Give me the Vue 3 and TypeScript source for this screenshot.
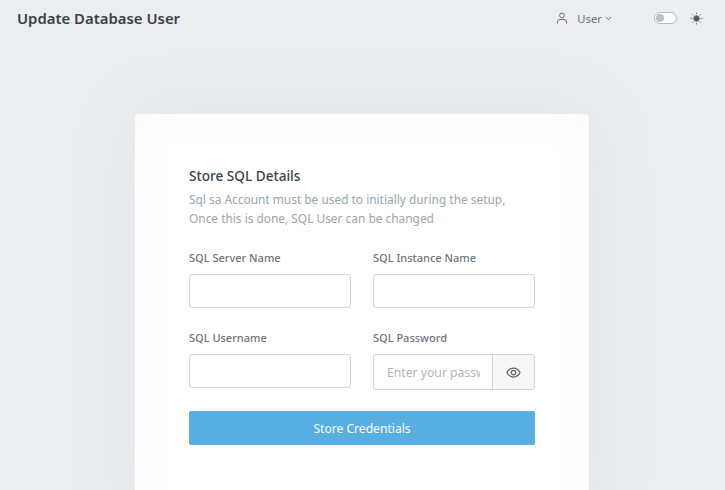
<script setup lang="ts">
const fields = [
  { label: 'SQL Server Name' },
  { label: 'SQL Instance Name' },
  { label: 'SQL Username' },
]
</script>

<template>
  <div class="page">
    <header class="topbar">
      <h1 class="title">Update Database User</h1>
      <div class="actions">
        <div class="user">
          <svg class="user-icon" width="12" height="12" viewBox="0 0 12 12" fill="none" stroke="#7a6a68" stroke-width="1">
            <circle cx="6" cy="3.4" r="2.4" />
            <path d="M1.5 11.5V10a2.5 2.5 0 0 1 2.5-2.5h4a2.5 2.5 0 0 1 2.5 2.5v1.5" />
          </svg>
          <span class="user-name">User</span>
          <svg width="7" height="5" viewBox="0 0 7 5" fill="none" stroke="#6c757d" stroke-width="1">
            <path d="M0.8 1l2.7 2.7L6.200 1" />
          </svg>
        </div>
        <span class="switch"><span class="knob"></span></span>
        <svg class="sun" width="13" height="13" viewBox="0 0 13 13" fill="#4f5a64" stroke="#6b757e" stroke-width="1">
          <circle cx="6.5" cy="6.5" r="2.8" />
          <path d="M6.5 0.5v1.6M6.5 10.9v1.6M0.5 6.5h1.6M10.9 6.5h1.6M2.3 2.3l1.1 1.1M9.6 9.6l1.1 1.1M2.3 10.7l1.1-1.1M9.6 3.4l1.1-1.1" fill="none" />
        </svg>
      </div>
    </header>

    <main class="content">
      <section class="card">
        <h2 class="card-title">Store SQL Details</h2>
        <p class="card-text">
          Sql sa Account must be used to initially during the setup,<br />
          Once this is done, SQL User can be changed
        </p>
        <form class="form" @submit.prevent>
          <div v-for="f in fields" :key="f.label" class="field">
            <label class="label">{{ f.label }}</label>
            <input class="input" type="text" />
          </div>
          <div class="field">
            <label class="label">SQL Password</label>
            <div class="password">
              <input class="password-input" type="password" placeholder="Enter your password" />
              <button class="eye" type="button">
                <svg width="15" height="15" viewBox="0 0 24 24" fill="none" stroke="#5b6670" stroke-width="2">
                  <path d="M1.5 12C4 7 7.500 4.800 12 4.800S20 7 22.500 12C20 17 16.500 19.200 12 19.200S4 17 1.500 12z" />
                  <circle cx="12" cy="12" r="3.500" />
                </svg>
              </button>
            </div>
          </div>
          <button class="submit" type="submit">Store Credentials</button>
        </form>
      </section>
    </main>
  </div>
</template>

<style>
html, body {
  margin: 0;
  height: 100%;
  overflow: hidden;
  background: #eaeef1;
}
</style>

<style scoped>
.page {
  height: 490px;
  overflow: hidden;
  font-family: "Noto Sans", "Open Sans", sans-serif;
  color: #495057;
}
.topbar {
  display: flex;
  align-items: center;
  justify-content: space-between;
  height: 36px;
  padding: 0 22px 0 17px;
}
.title {
  margin: 0;
  font-size: 14.900px;
  font-weight: 600;
  color: #3a4149;
}
.actions {
  display: flex;
  align-items: center;
}
.user {
  display: flex;
  align-items: center;
  gap: 4px;
  font-size: 11.300px;
  color: #6c757d;
  margin-right: 42px;
}
.user-icon {
  margin-right: 4px;
}
.user-name {
  margin: 0 -1px 0 1px;
}
.switch {
  display: block;
  width: 23px;
  height: 12px;
  box-sizing: border-box;
  border: 1px solid #b4bac0;
  border-radius: 6px;
  background: #fff;
  padding: 1px;
  margin-right: 13px;
}
.knob {
  display: block;
  width: 8px;
  height: 8px;
  border-radius: 50%;
  background: #b9bfc5;
}
.content {
  display: flex;
  justify-content: center;
  padding: 78px 1px 0 0;
}
.card {
  width: 454px;
  min-height: 420px;
  box-sizing: border-box;
  padding: 52px 54px;
  background: #fff;
  border-radius: 4px;
  box-shadow: 0 0 70px rgba(154, 161, 171, 0.1), inset 0 0 40px rgba(154, 161, 171, 0.04);
}
.card-title {
  margin: 0;
  font-size: 13.600px;
  font-weight: 500;
  line-height: 20px;
  color: #3a4149;
}
.card-text {
  margin: 4px 0 0;
  font-size: 11.900px;
  line-height: 19px;
  color: #98a6ad;
}
.form {
  display: grid;
  grid-template-columns: 162px 162px;
  column-gap: 22px;
  row-gap: 20px;
  margin-top: 22px;
}
.label {
  display: block;
  margin-bottom: 8px;
  font-size: 11px;
  line-height: 16px;
  font-weight: 500;
  color: #6c757d;
}
.input {
  display: block;
  width: 100%;
  height: 34px;
  margin-bottom: 2px;
  box-sizing: border-box;
  border: 1px solid #ced4da;
  border-radius: 3px;
  background: #fff;
}
.password {
  display: flex;
  height: 36px;
  box-sizing: border-box;
  border: 1px solid #ced4da;
  border-radius: 3px;
  overflow: hidden;
}
.password-input {
  flex: 1;
  min-width: 0;
  border: 0;
  padding: 0 12px 0 13px;
  font: inherit;
  font-size: 12.200px;
  outline: none;
}
.password-input::placeholder {
  color: #adb5bd;
  opacity: 1;
}
.eye {
  width: 42px;
  flex: none;
  padding: 0;
  display: flex;
  align-items: center;
  justify-content: center;
  border: 0;
  border-left: 1px solid #ced4da;
  background: #f7f7f7;
}
.submit {
  grid-column: 1 / -1;
  height: 34px;
  margin-top: 1px;
  border: 0;
  border-radius: 2px;
  background: #56aee3;
  color: #fff;
  font: inherit;
  font-size: 12.100px;
}
</style>
